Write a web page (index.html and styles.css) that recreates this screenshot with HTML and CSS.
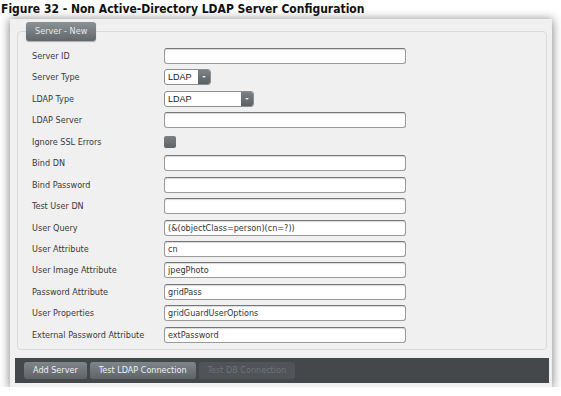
FILE: index.html
```html
<!DOCTYPE html>
<html lang="en">
<head>
    <meta charset="UTF-8">
    <meta name="viewport" content="width=device-width, initial-scale=1.0">
    <title>LDAP Server Configuration</title>

    <link rel="stylesheet" href="styles.css">
</head>
<body>
    <div class="caption">Figure 32 - Non Active-Directory LDAP Server Configuration</div>
    <div class="panel">
        <fieldset class="group">
            <legend class="tab">Server - New</legend>
            <div class="form">
                <label>Server ID</label>
                <input class="field" type="text" value="">

                <label>Server Type</label>
                <div class="select small"><span class="value">LDAP</span><span class="arrow"></span></div>

                <label>LDAP Type</label>
                <div class="select wide"><span class="value">LDAP</span><span class="arrow"></span></div>

                <label>LDAP Server</label>
                <input class="field" type="text" value="">

                <label>Ignore SSL Errors</label>
                <div class="check-cell"><span class="check"></span></div>

                <label>Bind DN</label>
                <input class="field" type="text" value="">

                <label>Bind Password</label>
                <input class="field" type="text" value="">

                <label>Test User DN</label>
                <input class="field" type="text" value="">

                <label>User Query</label>
                <input class="field" type="text" value="(&amp;(objectClass=person)(cn=?))">

                <label>User Attribute</label>
                <input class="field" type="text" value="cn">

                <label>User Image Attribute</label>
                <input class="field" type="text" value="jpegPhoto">

                <label>Password Attribute</label>
                <input class="field" type="text" value="gridPass">

                <label>User Properties</label>
                <input class="field" type="text" value="gridGuardUserOptions">

                <label>External Password Attribute</label>
                <input class="field" type="text" value="extPassword">
            </div>
        </fieldset>
        <div class="toolbar">
            <button class="button">Add Server</button>
            <button class="button">Test LDAP Connection</button>
            <button class="button disabled">Test DB Connection</button>
        </div>
    </div>
</body>
</html>
```

FILE: styles.css
```css
body {
    margin: 0;
    background-color: #fff;
    font-family: "DejaVu Sans Condensed", "DejaVu Sans", sans-serif;
}
.caption {
    height: 18px;
    line-height: 18px;
    padding-left: 1px;
    font-family: "DejaVu Sans Condensed", "DejaVu Sans", sans-serif;
    font-size: 12px;
    font-weight: bold;
    color: #111;
}
.panel {
    width: 542px;
    height: 368px;
    margin: 1px 0 0 10px;
    padding-top: 3px;
    box-sizing: border-box;
    background-color: #f0f0f0;
    box-shadow: 0 1px 9px 1px rgba(0, 0, 0, 0.45);
}
.group {
    margin: 0 5px 0 7px;
    padding: 0 0 6px 0;
    border: 1px solid #dadada;
    border-radius: 4px;
}
.tab {
    margin-left: 8px;
    padding: 0 9px;
    height: 19px;
    line-height: 19px;
    border-radius: 3px;
    background: linear-gradient(#8c9196, #62676c);
    box-shadow: 0 1px 1px rgba(0, 0, 0, 0.3);
    color: #e6e8ea;
    font-size: 9px;
}
.form {
    display: grid;
    grid-template-columns: 132px 242px;
    grid-auto-rows: 16px;
    row-gap: 5.44px;
    align-items: center;
    padding: 7px 0 0 14px;
}
.form label {
    font-size: 9px;
    color: #3a3a3a;
}
.field {
    height: 16px;
    margin: 0;
    padding: 0 3px;
    box-sizing: border-box;
    border: 1px solid #9a9a9a;
    border-top-color: #777;
    border-radius: 3px;
    background-color: #fff;
    box-shadow: inset 0 1px 1px rgba(0, 0, 0, 0.15);
    font-family: "DejaVu Sans Condensed", "DejaVu Sans", sans-serif;
    font-size: 9px;
    color: #333;
    outline: none;
}
.select {
    display: flex;
    height: 16px;
    box-sizing: border-box;
    border: 1px solid #8e8e8e;
    border-radius: 3px;
    background-color: #fff;
    overflow: hidden;
}
.select.small {
    width: 47px;
}
.select.wide {
    width: 90px;
}
.select .value {
    flex: 1;
    padding-left: 3px;
    line-height: 14px;
    font-family: "Liberation Sans", Arial, sans-serif;
    font-size: 9px;
    color: #222;
}
.select .arrow {
    position: relative;
    width: 12px;
    background: linear-gradient(#7c8186, #5c6166);
}
.select .arrow::after {
    content: '';
    position: absolute;
    left: 4px;
    top: 6px;
    border-left: 2px solid transparent;
    border-right: 2px solid transparent;
    border-top: 2px solid #e8e8e8;
}
.check-cell {
    display: flex;
    align-items: center;
}
.check {
    width: 12px;
    height: 12px;
    border-radius: 2px;
    background: linear-gradient(#7a7f84, #5e6368);
}
.toolbar {
    display: flex;
    gap: 3px;
    height: 25px;
    margin: 8px 3px 0 5px;
    padding: 4px 9px 0;
    box-sizing: border-box;
    background-color: #44484b;
}
.button {
    height: 17px;
    padding: 0 9px;
    border: 0;
    border-radius: 3px;
    background: linear-gradient(#80858a, #5e6368);
    font-family: "DejaVu Sans Condensed", "DejaVu Sans", sans-serif;
    font-size: 9px;
    color: #eef0f2;
}
.button.disabled {
    background: #505458;
    color: #6e7378;
}
```
